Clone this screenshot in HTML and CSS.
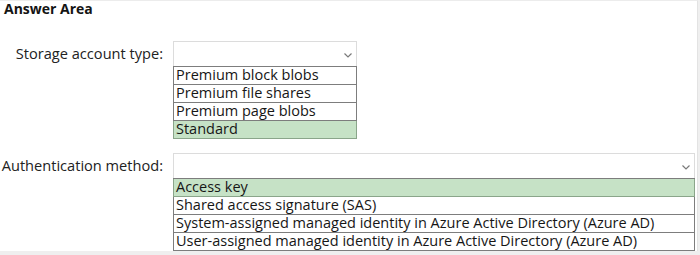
FILE: index.html
```html
<!DOCTYPE html>
<html>
<head>
<meta charset="utf-8">
<link rel="stylesheet" href="styles.css">
</head>
<body>
<div class="frame">
  <h1 class="title">Answer Area</h1>
  <div class="field field-first">
    <div class="label">Storage account type:</div>
    <div class="dropdown dropdown-narrow">
      <div class="select">
        <svg class="chevron" width="8" height="5" viewBox="0 0 8 5"><polyline points="0.5,0.5 4,4 7.5,0.5" fill="none" stroke="#7a7a7a" stroke-width="1.2"/></svg>
      </div>
      <ul class="options">
        <li class="option">Premium block blobs</li>
        <li class="option">Premium file shares</li>
        <li class="option">Premium page blobs</li>
        <li class="option option-selected">Standard</li>
      </ul>
    </div>
  </div>
  <div class="field field-second">
    <div class="label">Authentication method:</div>
    <div class="dropdown dropdown-wide">
      <div class="select">
        <svg class="chevron" width="8" height="5" viewBox="0 0 8 5"><polyline points="0.5,0.5 4,4 7.5,0.5" fill="none" stroke="#7a7a7a" stroke-width="1.2"/></svg>
      </div>
      <ul class="options">
        <li class="option option-selected">Access key</li>
        <li class="option">Shared access signature (SAS)</li>
        <li class="option">System-assigned managed identity in Azure Active Directory (Azure AD)</li>
        <li class="option">User-assigned managed identity in Azure Active Directory (Azure AD)</li>
      </ul>
    </div>
  </div>
</div>
</body>
</html>
```
FILE: styles.css
```css
html, body {
  margin: 0;
  padding: 0;
}
body {
  background: #efefef;
  font-family: "Open Sans", "Noto Sans", sans-serif;
  color: #1f1f1f;
  width: 700px;
  height: 255px;
  overflow: hidden;
}
.frame {
  box-sizing: border-box;
  width: 698px;
  height: 251px;
  background: #ffffff;
  border-top: 1px solid #ececec;
  border-right: 1px solid #e3e3e3;
}
.title {
  margin: 0;
  padding-left: 4px;
  font-size: 14px;
  font-weight: 700;
  line-height: 16px;
  color: #141414;
}
.field {
  display: grid;
  grid-template-columns: 163px auto;
  column-gap: 10px;
  align-items: start;
}
.field-first {
  margin-top: 24px;
}
.field-second {
  margin-top: 14px;
}
.label {
  text-align: right;
  font-size: 14.6px;
  line-height: 24px;
  color: #222222;
}
.dropdown-narrow {
  width: 184px;
}
.dropdown-wide {
  width: 522px;
}
.select {
  box-sizing: border-box;
  height: 25px;
  border: 1px solid #dcdcdc;
  border-bottom: none;
  display: flex;
  justify-content: flex-end;
  align-items: center;
  padding-right: 4px;
  padding-top: 2px;
}
.options {
  list-style: none;
  margin: 0;
  padding: 0;
  border-top: 1px solid #7d7d7d;
}
.option {
  box-sizing: border-box;
  height: 18px;
  border: 1px solid #7d7d7d;
  border-top: none;
  padding-left: 2px;
  font-size: 14.5px;
  line-height: 16px;
  white-space: nowrap;
  color: #161616;
}
.option-selected {
  background: #c6e2c6;
  border-color: #8aa58a;
}
```
